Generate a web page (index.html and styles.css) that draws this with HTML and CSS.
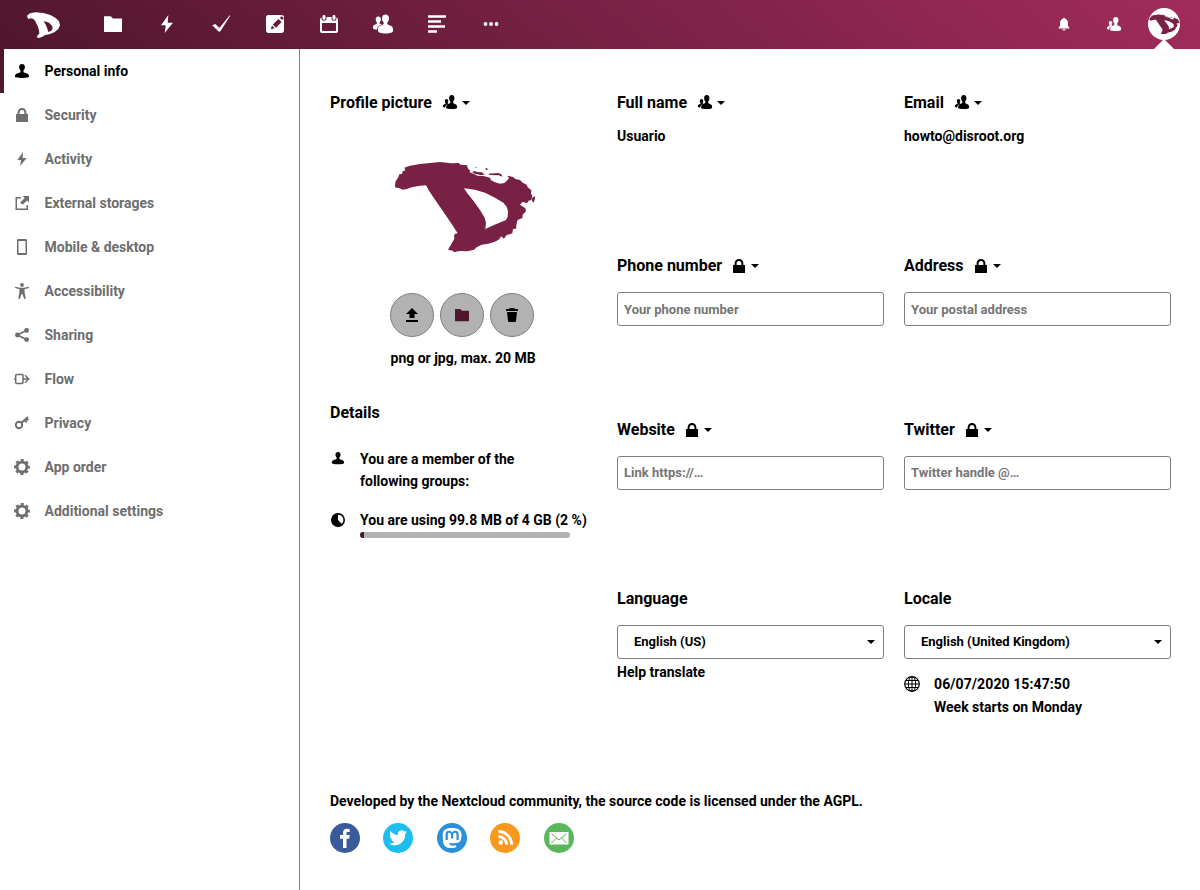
FILE: index.html
```html
<!DOCTYPE html>
<html lang="en">
<head>
<meta charset="utf-8">
<title>Personal info - Settings</title>
<link rel="stylesheet" href="styles.css">
</head>
<body>
<svg class="sprite" aria-hidden="true">
  <symbol id="user" viewBox="0 0 16 16"><path d="M8 1C6.200 1 5.100 2.200 5.100 4c0 1.600.6 2.700 1.400 3.500.2.900 0 1.500-.6 1.900C4.300 10 1 10.300 1 13v.6C1 14.700 4 15 8 15s7-.3 7-1.400V13c0-2.700-3.300-3-4.900-3.600-.6-.4-.8-1-.6-1.900.8-.8 1.400-1.900 1.400-3.500C10.900 2.200 9.800 1 8 1z"/></symbol>
  <symbol id="contacts" viewBox="-1 0 18 16" preserveAspectRatio="none"><path d="M10 1C8.200 1 7 2.200 7 4c0 1.700.7 2.700 1.400 3.500.1.900 0 1.400-.7 1.800-1.500.7-4 1-4 3.200V14c0 .8 2.800 1 6.300 1s6-.3 6-1.200v-1.300c0-2.100-2.300-2.500-3.700-3.100-.7-.4-.8-1-.7-1.900C12.300 6.700 13 5.700 13 4c0-1.800-1.200-3-3-3zM4 5C2.800 5 2.200 5.800 2.200 6.900c0 .9.3 1.500.8 2 .1.600-.1 1-.6 1.200C1.300 10.500 0 10.800 0 12v.8c0 .5 1 .7 2.700.7.100-2.100 1.300-3.100 3.400-3.900l-.5-.4-.2-.6c.4-.5.7-1 .7-1.700C6.100 5.800 5.300 5 4 5z"/></symbol>
  <symbol id="lock" viewBox="0 0 16 16"><path fill-rule="evenodd" d="M8 1C5.500 1 3.600 2.900 3.600 5.500V7H2v8h12V7h-1.600V5.500C12.400 2.900 10.500 1 8 1zm0 2c1.500 0 2.400 1.100 2.400 2.600V7H5.600V5.600C5.600 4.100 6.500 3 8 3z"/></symbol>
  <symbol id="bolt" viewBox="0 0 16 16"><path d="M9.200 0 2.700 9h4.200l-1 7 7.400-9.200H8.600z"/></symbol>
  <symbol id="folder" viewBox="0 0 16 16"><path d="M0 1h6l2 2h8v12H0z"/></symbol>
  <symbol id="gear" viewBox="0 0 16 16"><g fill="none" stroke="currentColor"><circle cx="8" cy="8" r="4.900" stroke-width="2.800"/><circle cx="8" cy="8" r="6.900" stroke-width="2" stroke-dasharray="3.200 2.219" stroke-dashoffset="1.600"/></g></symbol>
  <symbol id="caret" viewBox="0 0 8 4"><path d="M0 0h8L4 4z"/></symbol>
  <symbol id="disroot" viewBox="0 0 510 345"><path fill-rule="evenodd" d="M45 112L46 95 55 82 58 73 66 72 68 64 76 61 73 53 90 47 120 42 150 39 180 36 215 40 236 39 242 44 261 46 264 56 270 61 269 67 282 72 292 77 310 78 322 81 330 83 333 91 345 97 360 101 373 99 382 91 387 84 382 77 399 81 406 87 420 90 428 98 440 104 443 112 454 121 453 131 457 137 454 150 446 152 442 159 427 156 420 164 436 175 438 184 428 194 427 204 413 210 410 220 408 236 399 237 397 250 379 256 372 266 363 259 358 268 345 275 325 281 305 284 290 292 282 299 262 304 245 303 234 304 223 307 218 302 204 299 211 287 216 278 223 267 222 257 225 251 233 250 215 222 190 185 160 142 148 124 138 106 120 107 95 112 80 117 68 119 59 115zM252 115L262 130 280 152 300 180 314 203 318 218 316 237 340 226 378 210 383 200 384 184 380 170 370 158 345 143 315 128 285 119z"/><path d="M276 66l8-3 8 3 14 1 8 7-12 1-18-4zM285 51l5 1-2 3zM318 53l7 5-5 2-4-3zM326 71l29-2 9 4 4 7-12-4-29-1zM458 142l7-3-1 11-4 9-5-10z"/></symbol>
</svg>

<header class="topbar">
  <a class="brand"><svg viewBox="0 0 200 147"><path fill-rule="evenodd" d="M81 47L90 40 106 37 130 39 151 45 167 54 177 64 180 76 175 87 163 97 148 103 135 105 126 111 116 114 110 112 113 106 118 101 117 91 113 78 105 62 99 56 91 55 84 57zM131 64L138 76 142 86 145 96 153 93 158 85 156 77 148 69 139 65z"/></svg></a>
  <nav class="apps">
    <svg><use href="#folder"/></svg>
    <svg><use href="#bolt"/></svg>
    <svg viewBox="0 0 20 20"><path d="M1.200 11.200l3.200-1.200 4 4.100L18.700 1.200l.5.500L9.400 17.300 7.900 17.700z"/></svg>
    <svg viewBox="0 0 20 20"><path fill-rule="evenodd" d="M3 1h14l-2 3 2 2 2-2v12.500c0 1.500-1 2.500-2.500 2.500h-13C2 19 1 18 1 16.500v-13C1 2 2 1 3 1zM13.500 5 7.800 10.600l3.100 3.200 5.700-5.800zM7 11.500 5.800 15.200l3.900-1zM17 1l2 1v2l-3-2z"/></svg>
    <svg viewBox="0 0 20 20"><path fill-rule="evenodd" d="M5 1c.8 0 1.500.6 1.500 1.400v2c0 .8-.7 1.400-1.500 1.400s-1.500-.6-1.500-1.400v-2C3.500 1.600 4.200 1 5 1zm10 0c.8 0 1.500.6 1.500 1.400v2c0 .8-.7 1.400-1.500 1.400s-1.500-.6-1.500-1.400v-2C13.500 1.600 14.200 1 15 1zM7.500 3h5v1.800c0 1 1 2 2.500 2s2.500-1 2.500-2V3.500c1 .3 1.500 1 1.500 2V17c0 1.300-.7 2-2 2H3c-1.300 0-2-.7-2-2V5.500c0-1 .5-1.700 1.500-2v1.300c0 1 1 2 2.500 2s2.500-1 2.500-2zM3 9v7c0 .7.300 1 1 1h12c.7 0 1-.3 1-1V9z"/></svg>
    <svg viewBox="0 0 20 20"><path d="M12.500.5C10.300.5 9 2 9 4.300c0 2 .7 3.300 1.700 4.300.2 1.200-.1 1.700-.9 2.100-2 .9-4.800 1.400-4.800 4.100V17c.1 1.500 3 2.500 7.500 2.500S20 18.500 20 17v-2.200c0-2.700-2.800-3.200-4.800-4.100-.8-.4-1.100-.9-.9-2.100C15.300 7.600 16 6.300 16 4.300 16 2 14.700.5 12.500.5zM5.300 2.500C3.700 2.500 2.700 3.600 2.700 5.300c0 1.400.5 2.400 1.200 3.100.2.800-.1 1.200-.6 1.500C1.900 10.500 0 10.900 0 12.800v1.400c.1.800 1.500 1.300 4 1.500.1-3 2-4.300 4.800-5.300l-1.900-.7c-.4-.3-.5-.7-.3-1.300.8-.7 1.300-1.700 1.300-3.100 0-1.700-1-2.800-2.600-2.800z"/></svg>
    <svg viewBox="0 0 20 20"><path d="M1 1.200h18v2.500H1zM1 6.200h13v2.500H1zM1 11.200h17v2.500H1zM1 16.200h9v2.600H1z"/></svg>
    <svg viewBox="0 0 20 20"><circle cx="4.500" cy="10" r="1.900"/><circle cx="10" cy="10" r="1.900"/><circle cx="15.500" cy="10" r="1.900"/></svg>
  </nav>
  <div class="tools">
    <svg class="bell" viewBox="0 0 16 16"><path d="M8 1C7 1 6.400 1.600 6.400 2.400 4.400 3 3.500 4.700 3.500 6.700V10L2 12v1.200h12V12l-1.500-2V6.700c0-2-.9-3.700-2.900-4.300C9.600 1.600 9 1 8 1zM6 14c.2 1 1 1.500 2 1.500s1.800-.5 2-1.500z"/></svg>
    <svg class="people"><use href="#contacts"/></svg>
    <span class="avatar"><svg><use href="#disroot"/></svg></span>
  </div>
</header>

<div class="page">
  <nav class="sidebar">
    <a class="item active"><svg><use href="#user"/></svg>Personal info</a>
    <a class="item"><svg><use href="#lock"/></svg>Security</a>
    <a class="item"><svg class="bolt"><use href="#bolt"/></svg>Activity</a>
    <a class="item"><svg viewBox="0 0 16 16"><path d="M7 2H1.500v13H14V10h-1.500v3.500H3v-10h4zM8.500 1H15v6.500l-2-2-4.500 4.300-2.200-2.200L10.700 3z"/></svg>External storages</a>
    <a class="item"><svg viewBox="0 0 16 16"><path fill-rule="evenodd" d="M4.300 0h7.400c.8 0 1.300.5 1.300 1.300v13.400c0 .8-.5 1.300-1.300 1.300H4.300C3.500 16 3 15.500 3 14.700V1.300C3 .5 3.500 0 4.300 0zM4.500 2v12h7V2z"/></svg>Mobile &amp; desktop</a>
    <a class="item"><svg viewBox="0 0 16 16"><circle cx="8" cy="1.900" r="1.900"/><path d="M1.200 3.700l5 1h3.600l5-1 .2 1.300-4.500 1.200.2 3.800 1 5.800-1.500.2L8.400 11h-.8l-1.800 5-1.500-.2 1-5.800.2-3.800L1 5z"/></svg>Accessibility</a>
    <a class="item"><svg viewBox="0 0 16 16"><path fill="none" stroke="currentColor" stroke-width="1.700" d="M12.700 3.300 3.500 8l9.200 4.700"/><circle cx="12.600" cy="3.400" r="2.400"/><circle cx="3.400" cy="8" r="2.400"/><circle cx="12.600" cy="12.600" r="2.400"/></svg>Sharing</a>
    <a class="item"><svg viewBox="0 0 16 16"><g fill="none" stroke="currentColor" stroke-width="1.500"><rect x="1.700" y="3.500" width="7.300" height="9" rx="1"/><path d="M0 8h2M9 8h5M11 4.300 14.700 8 11 11.700"/></g></svg>Flow</a>
    <a class="item"><svg viewBox="0 0 16 16"><g fill="none" stroke="currentColor"><circle cx="5" cy="10" r="3.200" stroke-width="1.900"/><path stroke-width="2" d="M7.500 7.700 14 2M10.600 5l2.200 2.300M12.500 3.300l1.800 2"/></g></svg>Privacy</a>
    <a class="item"><svg><use href="#gear"/></svg>App order</a>
    <a class="item"><svg><use href="#gear"/></svg>Additional settings</a>
  </nav>

  <main class="content">
    <div class="columns">
      <section class="profile">
        <h3>Profile picture <svg><use href="#contacts"/></svg><svg class="caret"><use href="#caret"/></svg></h3>
        <svg class="portrait"><use href="#disroot"/></svg>
        <div class="buttons">
          <button><svg viewBox="0 0 16 16"><path d="M8 1l6 6h-3.500v4h-5V7H2zM2 13h12v2H2z"/></svg></button>
          <button class="tinted"><svg class="small"><use href="#folder"/></svg></button>
          <button><svg viewBox="0 0 16 16"><path d="M6 1h4l1 1h3v2H2V2h3zM3 5h10l-1 9c-.1.700-.4 1-1 1H5c-.6 0-.9-.3-1-1z"/></svg></button>
        </div>
        <p class="hint">png or jpg, max. 20 MB</p>
        <h3>Details</h3>
        <div class="detail groups"><svg><use href="#user"/></svg><p>You are a member of the<br>following groups:</p></div>
        <div class="detail quota"><svg viewBox="0 0 16 16"><path fill-rule="evenodd" d="M8 1a7 7 0 1 0 0 14A7 7 0 0 0 8 1zm0 1.700a5.300 5.300 0 0 1 3.700 9.100L8 8z"/></svg><div><p>You are using 99.8 MB of 4 GB (2 %)</p><div class="bar"><span></span></div></div></div>
      </section>

      <section class="fields">
        <div class="field"><h3>Full name <svg><use href="#contacts"/></svg><svg class="caret"><use href="#caret"/></svg></h3><p class="value">Usuario</p></div>
        <div class="field"><h3>Email <svg><use href="#contacts"/></svg><svg class="caret"><use href="#caret"/></svg></h3><p class="value">howto@disroot.org</p></div>
        <div class="field"><h3>Phone number <svg class="private"><use href="#lock"/></svg><svg class="caret"><use href="#caret"/></svg></h3><input placeholder="Your phone number"></div>
        <div class="field"><h3>Address <svg class="private"><use href="#lock"/></svg><svg class="caret"><use href="#caret"/></svg></h3><input placeholder="Your postal address"></div>
        <div class="field"><h3>Website <svg class="private"><use href="#lock"/></svg><svg class="caret"><use href="#caret"/></svg></h3><input class="raised" placeholder="Link https://…"></div>
        <div class="field"><h3>Twitter <svg class="private"><use href="#lock"/></svg><svg class="caret"><use href="#caret"/></svg></h3><input class="raised" placeholder="Twitter handle @…"></div>
        <div class="field"><h3>Language</h3><div class="select">English (US)<svg class="caret"><use href="#caret"/></svg></div><p class="translate">Help translate</p></div>
        <div class="field"><h3>Locale</h3><div class="select">English (United Kingdom)<svg class="caret"><use href="#caret"/></svg></div>
          <div class="clock"><svg viewBox="0 0 16 16"><g fill="none" stroke="currentColor"><circle cx="8" cy="8" r="7.300" stroke-width="1.200"/><ellipse cx="8" cy="8" rx="3.700" ry="7.300"/><path d="M8 1v14M1 8h14M2 4.500h12M2 11.500h12"/></g></svg><p><span class="time">06/07/2020 15:47:50</span><br>Week starts on Monday</p></div></div>
      </section>
    </div>

    <footer>
      <p>Developed by the Nextcloud community, the source code is licensed under the AGPL.</p>
      <div class="social">
        <svg viewBox="0 0 30 30"><circle cx="15" cy="15" r="15" fill="#3b5a9b"/><path fill="#fff" d="M13 25v-9.300h-3V12h3V9.700C13 7 14.500 5.800 16.900 5.800l2.800.1v3.200h-1.900c-1 0-1.300.5-1.300 1.300V12h3.200l-.5 3.700h-2.700V25z"/></svg>
        <svg viewBox="0 0 30 30"><circle cx="15" cy="15" r="15" fill="#1fbef0"/><path fill="#fff" d="M24 9.100c-.7.300-1.300.5-2 .6.700-.5 1.300-1.100 1.600-2-.7.400-1.500.7-2.300.9a3.700 3.700 0 0 0-6.300 3.400C12 11.800 9.200 10.400 7.300 8c-1 1.800-.5 3.900 1.200 5-.6 0-1.200-.2-1.700-.5 0 1.800 1.200 3.400 3 3.700-.6.200-1.100.2-1.700.1.500 1.500 1.900 2.600 3.500 2.600-1.700 1.300-3.600 1.700-5.600 1.500 7.200 4.600 16.100.1 16.100-8.600v-.7c.8-.5 1.400-1.200 1.900-2z"/></svg>
        <svg viewBox="0 0 30 30"><circle cx="15" cy="15" r="15" fill="#2b90d9"/><path fill="#fff" fill-rule="evenodd" d="M15 5c6 0 9.500 2 9.500 6.500 0 5.500-.7 7.900-5.500 8.500-2.500.4-5 .3-7-.3.100 3 3.100 3.400 7.200 2.600v1.900c-6.800 2-12.700.8-13.200-5.900-.4-4-.4-7 .1-9C7 6 10.500 5 15 5zM8.500 17h2.300v-5c0-1.500.5-2.200 1.500-2.200 1.200 0 1.700.8 1.700 2.200v3.500h2.200V12c0-1.400.6-2.200 1.700-2.200s1.600.7 1.600 2.200v5h2.200v-5.300c0-2.800-1.200-4-3.300-4-1.400 0-2.500.6-3.200 1.900-.7-1.300-1.700-1.900-3.100-1.900-2.200 0-3.600 1.300-3.600 4z"/></svg>
        <svg viewBox="0 0 30 30"><circle cx="15" cy="15" r="15" fill="#f8981d"/><circle cx="10.700" cy="19.500" r="2.300" fill="#fff"/><path fill="none" stroke="#fff" stroke-width="2.900" d="M8.400 13.500a8.300 8.300 0 0 1 8.300 8.300M8.400 8.500a13.200 13.200 0 0 1 13.200 13.300"/></svg>
        <svg viewBox="0 0 30 30"><circle cx="15" cy="15" r="15" fill="#5bb75b"/><path fill="#fff" d="M5.500 9h19v12.500h-19z"/><path fill="none" stroke="#5bb75b" d="M7.500 10.500l7.500 6.500 7.500-6.500M7.500 20l5-5M22.500 20l-5-5"/></svg>
      </div>
    </footer>
  </main>
</div>
</body>
</html>
```
FILE: styles.css
```css
* { box-sizing: border-box; }
body {
  margin: 0;
  height: 890px;
  overflow: hidden;
  background: #fff;
  color: #000;
  font: 700 14px/22px Roboto, sans-serif;
}
p, h3 { margin: 0; white-space: nowrap; }
svg { display: block; flex: none; width: 16px; height: 16px; fill: currentColor; }
.sprite { display: none; }

.topbar {
  display: flex;
  height: 49px;
  padding-left: 20px;
  color: #fff;
  background: linear-gradient(40deg, #50162d 0%, #a12c5b 100%);
}
.brand { width: 80px; }
.brand svg { width: 66.700px; height: 49px; margin-left: -20px; }
.apps { display: flex; align-items: center; gap: 34px; margin-left: 3px; padding-bottom: 1px; }
.apps svg { width: 20px; height: 20px; }
.apps svg:nth-child(1), .apps svg:nth-child(2) { padding: 1px; }
.tools { display: flex; align-items: center; margin-left: auto; margin-right: 20px; padding-bottom: 1px; }
.bell { width: 14px; height: 14px; margin-right: 35px; }
.people { margin-right: 26px; }
.avatar {
  position: relative;
  display: flex;
  align-items: center;
  justify-content: center;
  width: 32px;
  height: 32px;
  border-radius: 50%;
  background: #fff;
  color: #792144;
}
.avatar svg { width: 37px; height: 25px; }
.avatar::after {
  content: "";
  position: absolute;
  left: 6px;
  top: 31px;
  border: 10px solid transparent;
  border-top: 0;
  border-bottom-color: #fff;
}

.page { display: flex; height: 841px; }
.sidebar { width: 300px; flex: none; border-right: 1px solid #7f7f7f; }
.item {
  display: flex;
  align-items: center;
  gap: 14.500px;
  height: 44px;
  padding-left: 10px;
  border-left: 4px solid transparent;
  color: #6e6e6e;
}
.item.active { color: #000; border-color: #50162d; }
.item .bolt { padding: 1px; }

.content { padding: 39px 0 0 30px; }
.columns { display: flex; height: 701px; }
.profile { width: 287px; }
h3 { display: flex; align-items: center; height: 28px; padding-top: 2px; font-size: 16px; }
h3 svg { margin: -2px 0 0 10px; }
h3 .private { margin: 0 0 0 9px; }
svg.caret { width: 8px; height: 4px; }
h3 .caret { margin: 0 0 0 4px; }
.portrait { width: 170px; height: 115px; margin: 34px 0 0 50px; color: #792144; }
.buttons { display: flex; gap: 6px; margin: 28px 0 0 60px; }
button {
  display: flex;
  align-items: center;
  justify-content: center;
  width: 44px;
  height: 44px;
  padding: 0;
  border: 1px solid #7f7f7f;
  border-radius: 50%;
  background: #b2b2b2;
  color: #000;
}
button .small { width: 14px; height: 14px; }
.tinted { color: #50162d; }
.hint { margin: 10px 0 29px 60.500px; }
.detail { display: flex; gap: 14px; }
.groups { margin-top: 22px; }
.groups svg { width: 14px; margin: 2px 1px 0; }
.quota { margin-top: 17px; }
.quota svg { margin-top: 3px; }
.bar { width: 210px; height: 6px; margin-top: 1px; border-radius: 3px; overflow: hidden; background: #b2b2b2; }
.bar span { display: block; width: 4px; height: 6px; background: #50162d; }

.fields { display: grid; grid-template-columns: 267px 267px; grid-template-rows: 163px 164px 169px auto; column-gap: 20px; }
.value { margin-top: 9px; }
input, .select {
  width: 267px;
  height: 34px;
  margin: 13px 0 0;
  border: 1px solid #7f7f7f;
  border-radius: 3px;
  font: inherit;
  font-size: 13px;
  background: #fff;
}
input { display: block; padding: 0 6px; }
input.raised { padding-bottom: 2px; }
input::placeholder { color: #757575; opacity: 1; }
.select { display: flex; align-items: center; justify-content: space-between; padding: 0 8px 0 16px; }
.translate { line-height: 26px; }
.clock { display: flex; gap: 14px; margin-top: 14px; line-height: 23px; }
.clock svg { margin-top: 3px; }
.time { letter-spacing: 0.1px; }

footer { padding-top: 1px; }
.social { display: flex; gap: 23.400px; margin-top: 11px; }
.social svg { width: 30px; height: 30px; }
```
